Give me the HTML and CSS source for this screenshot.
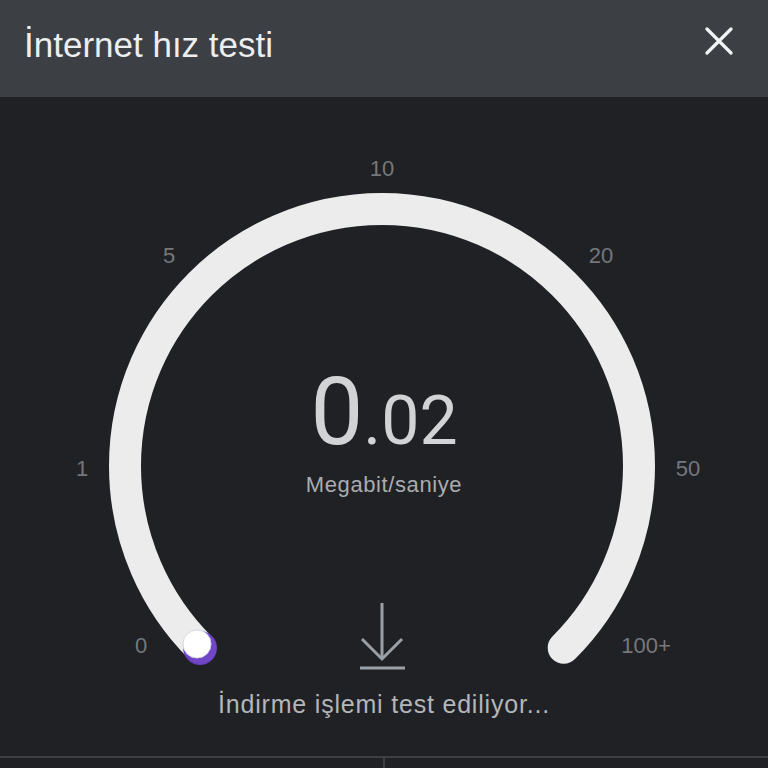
FILE: index.html
```html
<!DOCTYPE html>
<html lang="tr">
<head>
<meta charset="utf-8">
<title>İnternet hız testi</title>
<link rel="stylesheet" href="styles.css">
</head>
<body>
<div class="dialog">
  <header class="header">
    <h1 class="title">İnternet hız testi</h1>
    <button class="close" aria-label="Kapat">
      <svg width="28" height="28" viewBox="0 0 28 28"><path d="M2 2 L26 26 M26 2 L2 26" stroke="#f1f3f4" stroke-width="3.2" stroke-linecap="round" fill="none"/></svg>
    </button>
  </header>
  <main class="main">
    <div class="gauge">
      <svg class="gauge-svg" width="768" height="593" viewBox="0 97 768 593">
        <path d="M200.3 647.7 A257 257 0 1 1 563.7 647.7" stroke="#ececec" stroke-width="32" stroke-linecap="round" fill="none"/>
        <g class="ticks" font-family="Liberation Sans, Arial, sans-serif" font-size="22" fill="#74787d" text-anchor="middle" dominant-baseline="central">
          <text x="141" y="645">0</text>
          <text x="82" y="468">1</text>
          <text x="169" y="255">5</text>
          <text x="382" y="168">10</text>
          <text x="601" y="255">20</text>
          <text x="688" y="468">50</text>
          <text x="646" y="645">100+</text>
        </g>
        <circle cx="200" cy="648" r="17" fill="#6a3ec6" opacity="0.95"/>
        <circle cx="197" cy="644" r="14" fill="#ffffff" stroke="#d8d8e8" stroke-width="1"/>
        <g stroke="#9aa0a6" stroke-width="3" fill="none">
          <path d="M382 603 L382 658"/>
          <path d="M362 639 L382 659 L402 639"/>
          <path d="M360 668 L405 668"/>
        </g>
      </svg>
      <div class="readout">
        <div class="value">0<span class="decimals">.02</span></div>
        <div class="unit">Megabit/saniye</div>
      </div>
    </div>
    <p class="status">İndirme işlemi test ediliyor...</p>
  </main>
  <footer class="footer">
    <div class="footer-cell"></div>
    <div class="footer-cell footer-cell-right"></div>
  </footer>
</div>
</body>
</html>
```
FILE: styles.css
```css
html, body {
  margin: 0;
  padding: 0;
  background: #202124;
}
body {
  width: 768px;
  height: 768px;
  overflow: hidden;
  font-family: "Liberation Sans", Arial, sans-serif;
}
.dialog {
  display: flex;
  flex-direction: column;
  width: 768px;
  height: 768px;
}
.header {
  height: 97px;
  box-sizing: border-box;
  background: #3c3f43;
  display: flex;
  align-items: flex-start;
  justify-content: space-between;
  padding: 25px 35px 0 24px;
}
.title {
  margin: 0;
  font-weight: normal;
  font-size: 35px;
  line-height: 40px;
  color: #eceef0;
}
.close {
  margin-top: 2px;
  padding: 0;
  border: 0;
  background: none;
  width: 28px;
  height: 28px;
  display: block;
}
.close svg {
  display: block;
}
.main {
  display: flex;
  flex-direction: column;
  align-items: center;
}
.gauge {
  position: relative;
  width: 768px;
  height: 593px;
}
.gauge-svg {
  display: block;
}
.readout {
  position: absolute;
  left: 0;
  right: 0;
  top: 265px;
  text-align: center;
}
.value {
  font-family: Roboto, "Liberation Sans", sans-serif;
  font-size: 94px;
  line-height: 100px;
  height: 100px;
  color: #d2d3d5;
}
.decimals {
  font-size: 68px;
  line-height: 1;
}
.unit {
  margin-top: 11px;
  font-size: 22px;
  line-height: 24px;
  letter-spacing: 0.6px;
  color: #a9acb0;
}
.status {
  margin: 0;
  font-size: 25px;
  line-height: 28px;
  letter-spacing: 0.8px;
  color: #b3b6ba;
}
.footer {
  margin-top: auto;
  height: 10px;
  border-top: 2px solid #3c4043;
  display: flex;
}
.footer-cell {
  flex: 1;
}
.footer-cell-right {
  border-left: 2px solid #3c4043;
}
```
